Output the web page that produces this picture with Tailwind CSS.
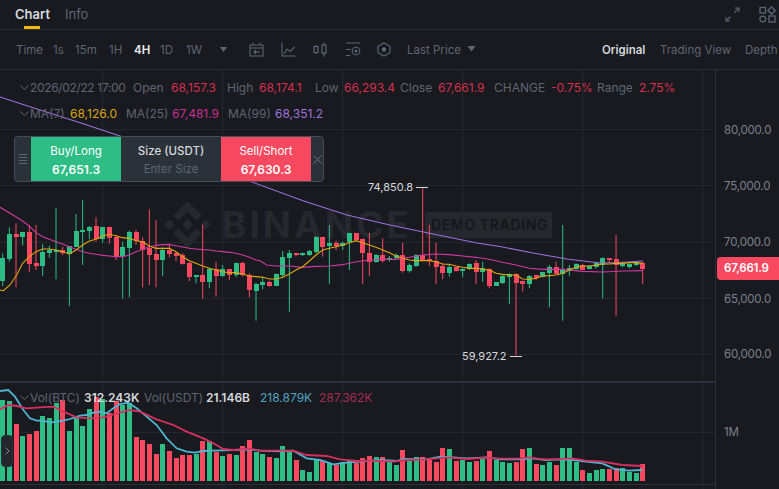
<!DOCTYPE html>
<html>
<head>
<meta charset="utf-8">
<script src="https://cdn.jsdelivr.net/npm/@tailwindcss/browser@4"></script>
</head>
<body class="bg-[#181a20]">
<div class="w-[779px] h-[489px] overflow-hidden flex flex-col bg-[#181a20] font-['Inter','Liberation_Sans',sans-serif] text-[12px] text-[#5e6673]">
  <!-- tabs -->
  <header class="h-[30px] shrink-0 border-b border-[#2b3139] flex items-center relative pl-[15px]">
    <span class="relative text-[13px] font-semibold text-[#d5d9de] leading-[28px] -mt-[2px]">Chart<span class="absolute left-[9px] top-[26px] w-[16px] h-[3px] bg-[#f0b90b]"></span></span>
    <span class="ml-[15px] text-[13px] text-[#5e6673] leading-[28px] -mt-[2px]">Info</span>
    <div class="ml-auto flex items-center gap-[19px] pr-[3px]">
      <svg class="w-[15px] h-[15px] text-[#5e6673]" viewBox="0 0 15 15" fill="none" stroke="currentColor" stroke-width="1.1"><path d="M1 14 L5.5 9.5 M1 10 V14 H5 M14 1 L9.5 5.5 M10 1 H14 V5"/></svg>
      <svg class="w-[17px] h-[17px] text-[#5e6673]" viewBox="0 0 17 17" fill="none" stroke="currentColor" stroke-width="1.3"><rect x="1" y="1.5" width="5.5" height="5.5"/><path d="M12.5 1 L16.3 4.5 L12.5 8 L8.8 4.5 Z"/><circle cx="3.8" cy="13" r="2.9"/><rect x="10" y="10" width="6" height="6"/></svg>
    </div>
  </header>
  <!-- toolbar -->
  <nav class="h-[40px] shrink-0 border-b border-[#2b3139] flex items-center relative pl-[16px] text-[11.5px] overflow-hidden whitespace-nowrap [&>*]:shrink-0">
    <span class="w-[37px] pt-[3px]">Time</span>
    <span class="w-[22px] pt-[3px]">1s</span>
    <span class="w-[34px] pt-[3px]">15m</span>
    <span class="w-[25px] pt-[3px]">1H</span>
    <span class="w-[26px] pt-[3px] font-semibold text-[#eaecef]">4H</span>
    <span class="w-[26px] pt-[3px]">1D</span>
    <span class="w-[33px] pt-[3px]">1W</span>
    <svg class="w-[10px] h-[6px] text-[#5e6673]" viewBox="0 0 10 6" fill="currentColor"><path d="M1 0 H8 L4.5 5 Z"/></svg>
    <svg class="w-[15px] h-[15px] ml-[20px] text-[#5e6673]" viewBox="0 0 15 15" fill="none" stroke="currentColor" stroke-width="1.1"><path d="M1 3 H14 V14 H1 Z M1 6 H14 M4 0.5 V3 M11 0.5 V3 M11 10 H5 M7 8 L5 10 L7 12"/></svg>
    <svg class="w-[15px] h-[15px] ml-[17px] text-[#5e6673]" viewBox="0 0 15 15" fill="none" stroke="currentColor" stroke-width="1.1"><path d="M1 0.5 V14 H14.5 M3 12 L6 7 L9 9.5 L13.5 5"/></svg>
    <svg class="w-[14px] h-[15px] ml-[17px] text-[#5e6673]" viewBox="0 0 14 15" fill="none" stroke="currentColor" stroke-width="1.2"><path d="M3 3 V12 M11 0.5 V14.5"/><rect x="1" y="4.5" width="4" height="6" fill="#181a20"/><rect x="9" y="3" width="4" height="8" fill="#181a20"/></svg>
    <svg class="w-[16px] h-[15px] ml-[18px] text-[#5e6673]" viewBox="0 0 16 15" fill="none" stroke="currentColor" stroke-width="1.1"><path d="M1 1 H15 M1 7.5 H6 M1 13.5 H5"/><circle cx="11" cy="9" r="3.8"/><circle cx="11" cy="9" r="1" fill="currentColor"/></svg>
    <svg class="w-[14px] h-[15px] ml-[16px] text-[#5e6673]" viewBox="0 0 14 15" fill="none" stroke="currentColor" stroke-width="1.2"><path d="M7 1 L13 4.3 V10.7 L7 14 L1 10.7 V4.3 Z"/><circle cx="7" cy="7.5" r="1.6" fill="currentColor"/></svg>
    <span class="ml-[16px] w-[55px] pt-[3px]">Last Price</span>
    <svg class="w-[9px] h-[6px] ml-[5px] mb-[2px] text-[#5e6673]" viewBox="0 0 9 6" fill="currentColor"><path d="M0.5 0 H8.5 L4.5 5.5 Z"/></svg>
    <span class="ml-[126px] pt-[3px] font-semibold text-[#d5d9de] w-[58px]">Original</span>
    <span class="w-[85px] pt-[3px]">Trading View</span>
    <span class="pt-[3px]">Depth</span>
  </nav>
  <!-- chart -->
  <main class="flex-1 flex min-h-0">
    <section class="relative w-[715px] shrink-0 overflow-hidden">
      <!-- watermark -->
      <div class="absolute left-[163px] top-[131px] flex items-center text-[#26282e]">
        <svg class="w-[49px] h-[47px] shrink-0" viewBox="0 0 126.61 126.61" fill="currentColor"><path d="M38.73 53.2l24.59-24.58 24.6 24.6 14.3-14.31L63.32 0 24.42 38.9zM0 63.31l14.3-14.31 14.31 14.31-14.31 14.3zM38.73 73.41l24.59 24.59 24.6-24.6 14.31 14.29-38.9 38.91-38.91-38.88-.02-.02zM98 63.31l14.3-14.31 14.31 14.3-14.31 14.32z"/><path d="M77.83 63.3L63.32 48.78 52.59 59.51l-1.24 1.23-2.54 2.54 14.51 14.5 14.51-14.47z"/></svg>
        <span class="ml-[10px] w-[203px] shrink-0 text-[37px] leading-none font-bold tracking-[3px]">BINANCE</span>
        <span class="w-[127px] h-[26px] shrink-0 rounded-[2px] bg-[#26282e] text-[#16181d] text-[14px] font-bold tracking-[0.6px] leading-[26px] pl-[6px] whitespace-nowrap">DEMO TRADING</span>
      </div>
      <svg id="chart" class="absolute left-0 top-0 w-[715px] h-[419px]" viewBox="0 70 715 419"></svg>

      <!-- legend -->
      <div class="absolute left-[20px] top-[10px] flex items-center h-[16px] whitespace-nowrap text-[12px]">
        <svg class="w-[9px] h-[6px] mr-[1px]" viewBox="0 0 9 6" fill="none" stroke="#5e6673"><path d="M0.5 0.5 L4.5 4.5 L8.5 0.5"/></svg>
        <span class="w-[103px] tracking-[-0.35px]">2026/02/22 17:00</span>
        <span class="w-[38px]">Open</span><span class="w-[56px] text-[#d5304c]">68,157.3</span>
        <span class="w-[32px]">High</span><span class="w-[56px] text-[#d5304c]">68,174.1</span>
        <span class="w-[29px]">Low</span><span class="w-[56px] text-[#d5304c]">66,293.4</span>
        <span class="w-[38px]">Close</span><span class="w-[56px] text-[#d5304c]">67,661.9</span>
        <span class="w-[57px]">CHANGE</span><span class="w-[46px] text-[#d5304c]">-0.75%</span>
        <span class="w-[42px]">Range</span><span class="text-[#d5304c]">2.75%</span>
      </div>
      <div class="absolute left-[20px] top-[36px] flex items-center h-[16px] whitespace-nowrap text-[12px]">
        <svg class="w-[9px] h-[6px] mr-[1px]" viewBox="0 0 9 6" fill="none" stroke="#5e6673"><path d="M0.5 0.5 L4.5 4.5 L8.5 0.5"/></svg>
        <span class="w-[40px]">MA(7)</span><span class="w-[56px] text-[#dba70f]">68,126.0</span>
        <span class="w-[46px]">MA(25)</span><span class="w-[56px] text-[#c42f94]">67,481.9</span>
        <span class="w-[47px]">MA(99)</span><span class="text-[#a272dc]">68,351.2</span>
      </div>
      <div class="absolute left-[20px] top-[320px] flex items-center h-[16px] whitespace-nowrap text-[12px]">
        <svg class="w-[9px] h-[6px] mr-[1px]" viewBox="0 0 9 6" fill="none" stroke="#5e6673"><path d="M0.5 0.5 L4.5 4.5 L8.5 0.5"/></svg>
        <span class="w-[54px]">Vol(BTC)</span><span class="w-[60px] font-semibold text-[#d5d9de]">312.243K</span>
        <span class="w-[62px]">Vol(USDT)</span><span class="w-[54px] font-semibold text-[#d5d9de]">21.146B</span>
        <span class="w-[59px] text-[#4fa6c0]">218.879K</span><span class="text-[#a52c52]">287.362K</span>
      </div>

      <!-- high / low labels -->
      <div class="absolute left-[368px] top-[110px] flex items-center text-[11px] leading-[14px] text-[#d5d9de]">74,850.8<span class="ml-[3px] w-[12px] h-[1px] bg-[#d5d9de]"></span></div>
      <div class="absolute left-[462px] top-[279px] flex items-center text-[11px] leading-[14px] text-[#d5d9de]">59,927.2<span class="ml-[3px] w-[12px] h-[1px] bg-[#d5d9de]"></span></div>

      <!-- order panel -->
      <div class="absolute left-[14px] top-[66px] w-[310px] h-[46px] flex rounded-[4px] border border-[#474d57] bg-[#2b3139] overflow-hidden">
        <div class="w-[16px] flex flex-col items-center justify-center gap-[2px]">
          <span class="w-[8px] h-[1px] bg-[#5e6673]"></span><span class="w-[8px] h-[1px] bg-[#5e6673]"></span><span class="w-[8px] h-[1px] bg-[#5e6673]"></span><span class="w-[8px] h-[1px] bg-[#5e6673]"></span>
        </div>
        <div class="w-[90px] bg-[#2ebd85] flex flex-col items-center justify-center gap-[3px] pt-[2px] text-white">
          <span class="text-[11.5px] leading-[15px]">Buy/Long</span>
          <span class="text-[12px] leading-[15px] font-semibold">67,651.3</span>
        </div>
        <div class="w-[100px] flex flex-col items-center justify-center gap-[3px] pt-[2px]">
          <span class="text-[11.5px] leading-[15px] font-medium text-[#d5d9de]">Size (USDT)</span>
          <span class="text-[11.5px] leading-[15px] text-[#5e6673]">Enter Size</span>
        </div>
        <div class="w-[90px] bg-[#f84960] flex flex-col items-center justify-center gap-[3px] pt-[2px] text-white">
          <span class="text-[11.5px] leading-[15px]">Sell/Short</span>
          <span class="text-[12px] leading-[15px] font-semibold">67,630.3</span>
        </div>
        <div class="flex-1 flex items-center justify-center">
          <svg class="w-[9px] h-[9px]" viewBox="0 0 9 9" fill="none" stroke="#6b7380"><path d="M0.5 0.5 L8.5 8.5 M8.5 0.5 L0.5 8.5"/></svg>
        </div>
      </div>

      <!-- collapse handle -->
      <div class="absolute left-[1px] top-[365px] w-[12px] h-[32px] rounded-[4px] bg-[#23262d] border border-[#2b3139] flex items-center justify-center">
        <svg class="w-[5px] h-[8px]" viewBox="0 0 5 8" fill="none" stroke="#848e9c"><path d="M0.5 0.5 L4 4 L0.5 7.5"/></svg>
      </div>
    </section>
    <!-- axis -->
    <aside class="relative flex-1 border-l border-[#2b3139] text-[11.5px] tracking-[-0.2px] text-[#7a828e]">
      <span class="absolute left-[8px] top-[52px] leading-[16px]">80,000.0</span>
      <span class="absolute left-[8px] top-[108px] leading-[16px]">75,000.0</span>
      <span class="absolute left-[8px] top-[164px] leading-[16px]">70,000.0</span>
      <span class="absolute left-[8px] top-[221px] leading-[16px]">65,000.0</span>
      <span class="absolute left-[8px] top-[276px] leading-[16px]">60,000.0</span>
      <span class="absolute left-[8px] top-[354px] leading-[16px]">1M</span>
      <span class="absolute left-[1px] top-[187px] w-[63px] h-[23px] rounded-l-[4px] bg-[#f84960] text-white font-semibold text-[11.5px] leading-[23px] pl-[7px]">67,661.9</span>
    </aside>
  </main>
</div>
<script>
var G='#2ebd85',R='#f84960';
var c1=[['g',160,175,245,258],['g',82,102,178,185],['r',70,102,110,262],['g',95,96,110,137],['r',75,96,192,215],['r',75,190,198,210],['g',132,155,198,228],['g',137,150,158,173],['g',25,150,156,238],['r',140,150,160,165],['g',138,138,162,318],['g',42,93,140,140],['g',0,90,96,195],['g',78,80,92,118],['r',52,78,118,125],['g',80,82,118,128],['r',80,82,115,130],['r',105,112,170,180],['g',125,142,168,296],['g',92,96,145,292],['r',90,96,122,135],['r',112,122,148,262],['r',28,145,165,255],['r',60,162,180,262],['g',142,150,180,228],['r',130,150,162,172],['r',155,160,168,183],['r',160,165,192,194],['r',185,188,230,243],['g',225,225,232,250],['r',75,225,246,296],['g',205,207,246,265],['r',186,208,230,290],['g',195,208,230,230],['r',208,208,225,240],['g',188,190,225,232],['r',185,190,226,230],['r',220,225,270,292],['g',248,252,272,362]];
var c2=[['g',322,335,345,358],['r',332,335,348,350],['g',310,312,348,348],['g',243,262,316,325],['g',240,250,265,425],['r',250,250,256,260],['g',248,250,256,258],['g',240,243,256,258],['g',198,200,245,250],['r',200,200,230,260],['g',165,220,228,342],['r',212,220,230,240],['g',215,218,226,240],['g',188,190,218,300],['r',188,188,210,212],['r',205,207,250,342],['r',188,248,275,318],['g',252,255,275,278],['r',205,255,272,278],['g',258,263,270,275],['g',250,255,265,268],['r',218,255,302,308],['g',280,285,302,308],['g',252,255,288,290],['r',52,255,270,270],['r',165,268,275,288],['r',218,272,290,342],['r',280,288,308,328],['g',285,290,308,320],['r',290,292,304,305],['g',295,296,303,322],['g',280,282,296,300],['r',270,280,308,342],['g',275,295,308,335],['r',295,296,348,355],['g',336,336,348,348],['g',315,318,340,342],['g',310,312,322,402],['r',310,312,338,556]];
var c3=[['r',212,212,220,244],['g',195,197,220,235],['r',195,196,204,210],['g',185,186,200,202],['g',165,170,188,292],['r',155,170,190,192],['g',45,180,192,332],['g',165,175,185,198],['g',160,162,178,180],['r',162,164,178,180],['g',165,168,176,178],['g',155,160,172,175],['g',142,143,163,265],['r',144,144,150,158],['r',75,147,165,318],['g',155,158,167,172],['g',160,162,170,175],['g',155,156,166,168],['r',155,158,176,222]];
var candles=[];
c1.forEach(function(c){candles.push([c[0],200+c[1]/3,200+c[2]/3,200+c[3]/3,200+c[4]/3])});
c2.forEach(function(c){candles.push([c[0],170+c[1]/3,170+c[2]/3,170+c[3]/3,170+c[4]/3])});
c3.forEach(function(c){candles.push([c[0],210+c[1]/3,210+c[2]/3,210+c[3]/3,210+c[4]/3])});
var vol=[[60,'g'],[62,'g'],[133,'r'],[168,'g'],[162,'r'],[153,'r'],[108,'g'],[113,'g'],[70,'g'],[60,'r'],[153,'g'],[108,'g'],[137,'g'],[87,'g'],[52,'r'],[57,'g'],[100,'r'],[62,'r'],[75,'g'],[68,'g'],[170,'r'],[180,'r'],[193,'r'],[223,'r'],[192,'g'],[212,'r'],[233,'r'],[225,'r'],[225,'r'],[222,'g'],[184,'r'],[182,'g'],[215,'r'],[228,'g'],[223,'r'],[224,'g'],[198,'r'],[180,'r'],[215,'g'],
[222,'g'],[232,'r'],[233,'g'],[198,'g'],[215,'g'],[241,'r'],[270,'g'],[275,'g'],[238,'g'],[242,'r'],[250,'g'],[255,'r'],[247,'g'],[240,'g'],[250,'r'],[235,'r'],[229,'r'],[232,'g'],[231,'r'],[247,'g'],[256,'g'],[211,'r'],[243,'g'],[232,'g'],[232,'r'],[240,'r'],[245,'r'],[205,'r'],[207,'g'],[243,'r'],[240,'g'],[245,'g'],[243,'r'],[236,'g'],[213,'r'],[240,'g'],[247,'g'],[248,'g'],[245,'r'],
[206,'r'],[205,'g'],[252,'r'],[255,'g'],[247,'g'],[254,'r'],[204,'g'],[205,'g'],[245,'g'],[270,'r'],[280,'g'],[270,'g'],[266,'g'],[267,'r'],[263,'r'],[265,'g'],[275,'g'],[278,'g'],[253,'r']];
function pts(a,x0,y0){var s=[];for(var i=0;i<a.length;i+=2){s.push((x0+a[i]/3).toFixed(2)+','+(y0+a[i+1]/3).toFixed(2))}return s.join(' ')}
var ma7=[pts([0,270,10,272,30,255,50,225,68,190,88,170,108,155,128,147,148,147,168,150,188,155,208,162,228,150,248,135,268,123,288,118,308,108,328,103,348,107,368,113,388,115,408,122,428,125,448,138,468,145,488,145,508,145,528,155,548,170,568,182,588,190,608,198,628,205,648,210,668,215,688,218,708,218,728,222,748,228,768,230],0,200),
pts([10,322,28,327,48,327,68,322,88,312,108,300,128,290,148,273,168,255,188,240,208,235,228,230,248,225,268,218,288,212,308,218,328,225,348,232,368,240,388,248,408,258,428,265,448,270,468,272,488,272,508,272,528,275,548,282,568,283,588,288,608,292,628,295,648,295,668,298,688,300,708,310,728,313,748,315],260,170),
pts([48,195,68,207,88,208,108,205,128,198,148,197,168,195,188,190,208,180,228,172,248,168,268,168,288,165,308,162,328,162,348,160,368,160,388,158,408,158,428,160],500,210)].join(' ');
var ma25=[pts([0,22,30,40,60,58,88,78,108,98,128,110,148,118,168,125,188,132,208,140,228,148,248,155,268,160,288,163,308,166,328,168,348,170,368,170,388,165,408,155,428,148,448,140,468,136,488,134,508,134,528,137,548,141,568,145,588,147,608,149,628,150,648,153,668,155,688,157,708,160,728,165,748,172,768,180],0,200),
pts([0,272,20,285,48,288,88,288,128,292,168,289,208,288,248,284,288,275,328,270,368,267,408,268,448,262,488,255,528,252,568,254,608,258,648,262,688,268],260,170),
pts([0,155,48,165,88,175,128,178,188,178,248,184,308,186,368,183,428,182],500,210)].join(' ');
var ma99='0,97 40,110 84,124 117,135 252,182 303,200.7 347,215 390,225 433,234 477,243 500,246.5 533,253 567,259 600,263 620,262.5 643,261';
var vb=[pts([0,33,25,30,45,50,70,90,90,115,110,122,130,122,150,128,170,125,190,122,210,117,240,107,260,105,280,98,300,95,320,100,340,85,360,72,385,68,410,85,440,110,470,135,500,175,530,205,560,215,585,218,610,213,640,212,700,210,750,208],0,380),
pts([0,212,60,214,100,212,140,235,180,240,220,253,260,248,300,245,360,240,410,243,430,237,500,238,540,230,580,232,620,235,680,232,720,238],260,380),
pts([0,238,40,235,80,240,120,238,160,240,250,250,290,268,330,272,370,270],519,380)].join(' ');
var vr=[pts([0,88,25,75,50,78,80,85,120,82,160,80,190,95,230,112,270,115,310,112,350,100,390,90,420,95,470,118,520,135,560,155,610,175,640,190,670,207,700,210,750,206],0,380),
pts([0,212,60,212,100,212,140,225,200,228,240,238,290,243,350,242,400,245,440,240,500,238,560,232,620,237,680,233,720,236],260,380),
pts([0,236,30,232,70,238,110,238,160,235,200,242,250,245,310,255,370,258],519,380)].join(' ');
var h='';
[102,222,342,462,582,702].forEach(function(x){h+='<line x1="'+(x+.5)+'" x2="'+(x+.5)+'" y1="70" y2="489" stroke="#23272e"/>'});
[129,185,242,298,354,432].forEach(function(y){h+='<line x1="0" x2="715" y1="'+(y+.5)+'" y2="'+(y+.5)+'" stroke="#23272e"/>'});
candles.forEach(function(c,i){
  var cx=2.67+6.667*i,col=c[0]=='g'?G:R;
  h+='<rect x="'+(cx-.5).toFixed(2)+'" y="'+c[1].toFixed(1)+'" width="1" height="'+(c[4]-c[1]).toFixed(1)+'" fill="'+col+'"/>';
  h+='<rect x="'+Math.round(cx-2.5)+'" y="'+Math.round(c[2])+'" width="5" height="'+Math.max(1,Math.round(c[3]-c[2]))+'" fill="'+col+'"/>';
});
h+='<polyline points="'+ma99+'" fill="none" stroke="#a06fdc" stroke-width="1.1"/>';
h+='<polyline points="'+ma25+'" fill="none" stroke="#d13aa2" stroke-width="1.1"/>';
h+='<polyline points="'+ma7+'" fill="none" stroke="#e0a70c" stroke-width="1.1"/>';
vol.forEach(function(v,i){
  var cx=2.67+6.667*i,y=Math.round(380+v[0]/3);
  h+='<rect x="'+Math.round(cx-2.5)+'" y="'+y+'" width="5" height="'+(481-y)+'" fill="'+(v[1]=='g'?G:R)+'"/>';
});
h+='<polyline points="'+vb+'" fill="none" stroke="#4fb4cf" stroke-width="1.8"/>';
h+='<polyline points="'+vr+'" fill="none" stroke="#d7305f" stroke-width="1.8"/>';
h+='<rect x="0" y="381" width="715" height="2" fill="#2b3139"/><rect x="0" y="484" width="715" height="1" fill="#2b3139"/>';
document.getElementById('chart').innerHTML=h;
</script>
</body>
</html>
